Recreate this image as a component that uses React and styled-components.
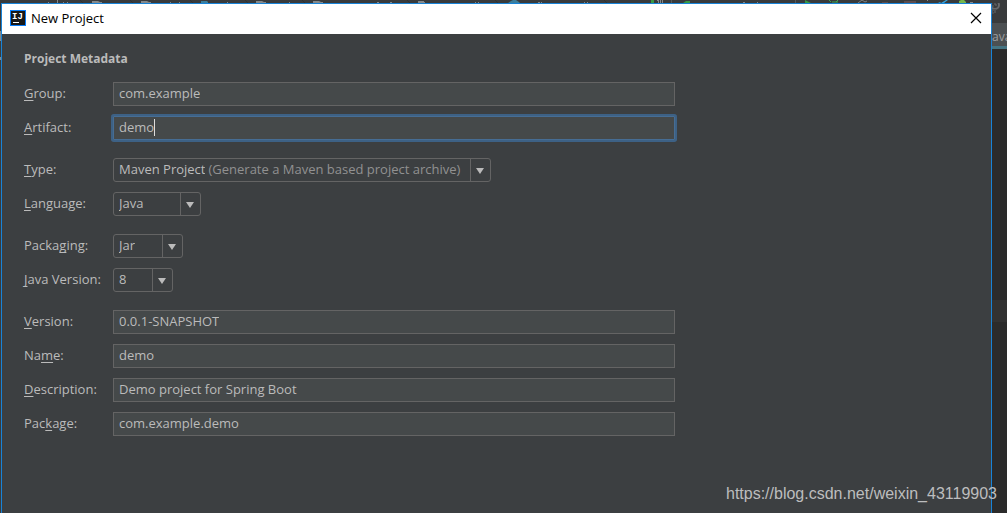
import React, { useState } from "react";
import styled, { createGlobalStyle } from "styled-components";

const textFields = {
  group: "com.example",
  artifact: "demo",
  version: "0.0.1-SNAPSHOT",
  name: "demo",
  description: "Demo project for Spring Boot",
  package: "com.example.demo",
};

const sections = [
  [
    { id: "group", label: ["", "G", "roup:"] },
    { id: "artifact", label: ["", "A", "rtifact:"] },
  ],
  [
    {
      id: "type",
      label: ["", "T", "ype:"],
      options: ["Maven Project", "Gradle Project"],
      hint: "(Generate a Maven based project archive)",
      width: 378,
    },
    {
      id: "language",
      label: ["", "L", "anguage:"],
      options: ["Java", "Kotlin", "Groovy"],
      width: 88,
    },
  ],
  [
    {
      id: "packaging",
      label: ["Packa", "g", "ing:"],
      options: ["Jar", "War"],
      width: 70,
    },
    {
      id: "javaVersion",
      label: ["", "J", "ava Version:"],
      options: ["8", "11", "14"],
      width: 60,
    },
  ],
  [
    { id: "version", label: ["", "V", "ersion:"] },
    { id: "name", label: ["Na", "m", "e:"] },
    { id: "description", label: ["", "D", "escription:"] },
    { id: "package", label: ["Pac", "k", "age:"] },
  ],
];

const ToolbarArt = () => (
  <svg width="1007" height="3" viewBox="0 0 1007 3" aria-hidden="true">
    <g fill="#85898b">
      <path d="M92 1h6l2 1h2v1H92zM141 1h6l2 1h2v1h-10zM256 1h6l2 1h2v1h-10zM313 1h6l2 1h2v1h-10zM418 1h6v1h1v1h-7z" />
      <path d="M48 2h1v1h-1zM57 0h1v3h-1zM63 2h1v1h-1zM67 2h1v1h-1zM170 2h1v1h-1zM179 2h1v1h-1zM227 2h1v1h-1zM289 2h1v1h-1zM377 2h2v1h-2zM390 2h2v1h-2zM475 2h1v1h-1zM478 2h1v1h-1zM538 2h2v1h-2zM541 2h1v1h-1zM584 2h1v1h-1zM587 2h1v1h-1zM743 2h2v1h-2zM757 2h1v1h-1z" />
      <path d="M657 0h2v3h-1V1h-1zM660 0h1v3h-1zM662 0h1v3h-1z" />
    </g>
    <path d="M201 1h6l1 1v1h-7zM508 3l3-2 2-1h3l3 2 1 1z" fill="#3b7e9c" />
    <path
      d="M80 0l3 3M130 0l3 3M190 0l3 3M245 0l3 3M302 0l3 3M407 0l3 3M495 0l3 3M604 0l3 3"
      stroke="#2f3233"
      fill="none"
    />
    <path d="M651 0h3v3h-3zM683 3l3-2h4v2zM805 0l6 3h-6z" fill="#389945" />
    <path d="M829 0l2 2M838 0l-2 2M832 2h6" stroke="#3fa650" fill="none" />
    <path d="M858 3l4-3 3 2 2-1" stroke="#7e8284" fill="none" />
    <path d="M671 0h1v3h-1zM795 0h1v3h-1z" fill="#565a5c" />
    <path d="M904 1h12v2h-12zM882 2h6v1h-6z" fill="#5d4c4d" />
    <path d="M938 3l2-1 1 1 5-3h2l-4 3z" fill="#36a3d9" />
    <path d="M959 3v-2l2-1h3l2 2v1z" fill="#75b74d" />
    <path d="M970 2h3v1h-3zM927 0h1v1h-1z" fill="#85898b" />
  </svg>
);

const SearchArt = () => (
  <svg width="15" height="14" viewBox="0 0 15 14" aria-hidden="true">
    <path d="M0 3h2M1 9v2" stroke="#5d6062" fill="none" />
    <circle cx="3" cy="2" r="4" stroke="#67696b" strokeWidth="2" fill="none" />
    <path d="M3 0v2h2" stroke="#67696b" fill="none" />
    <path d="M0 10v-3h3v3" stroke="#505355" strokeWidth="2" fill="none" />
  </svg>
);

const Logo = () => (
  <svg width="16" height="16" viewBox="0 0 16 16" aria-hidden="true">
    <rect width="16" height="16" fill="#087cfa" />
    <rect x="1" y="1" width="14" height="14" fill="#181818" />
    <LogoText x="2" y="9">
      IJ
    </LogoText>
    <rect x="3" y="12" width="6" height="1" fill="#fff" />
  </svg>
);

const CloseIcon = () => (
  <svg width="12" height="12" viewBox="0 0 12 12" aria-hidden="true">
    <path d="M1 1l10 10M11 1L1 11" stroke="#000" strokeWidth="1.2" />
  </svg>
);

const Row = ({ field, children }) => {
  const [before, key, after] = field.label;

  return (
    <FormRow>
      <Label htmlFor={field.id}>
        {before}
        <Mnemonic>{key}</Mnemonic>
        {after}
      </Label>
      {children}
    </FormRow>
  );
};

const ComboBox = ({ id, options, hint, width }) => (
  <Combo $width={width}>
    <ComboValue>
      <Select id={id}>
        {options.map((option) => (
          <option key={option}>{option}</option>
        ))}
      </Select>
      {hint && <Hint>{hint}</Hint>}
    </ComboValue>
    <Arrow>
      <svg width="8" height="6" viewBox="0 0 8 6" aria-hidden="true">
        <path d="M0 0h8L4 6z" fill="#bbbbbb" />
      </svg>
    </Arrow>
  </Combo>
);

const App = () => {
  const [values, setValues] = useState(textFields);
  const [focused, setFocused] = useState("artifact");

  const change = (event) =>
    setValues({ ...values, [event.target.id]: event.target.value });

  return (
    <Desktop>
      <GlobalStyle />
      <TopStrip>
        <ToolbarArt />
      </TopStrip>
      <Workspace>
        <LeftStrip />
        <Dialog>
          <TitleBar>
            <Logo />
            <DialogTitle>New Project</DialogTitle>
            <CloseButton type="button" aria-label="Close">
              <CloseIcon />
            </CloseButton>
          </TitleBar>
          <Form>
            <Heading>Project Metadata</Heading>
            {sections.map((fields) => (
              <Section key={fields[0].id}>
                {fields.map((field) => (
                  <Row key={field.id} field={field}>
                    {field.options ? (
                      <ComboBox
                        id={field.id}
                        options={field.options}
                        hint={field.hint}
                        width={field.width}
                      />
                    ) : (
                      <TextBox $focused={focused === field.id}>
                        <Input
                          id={field.id}
                          value={values[field.id]}
                          onChange={change}
                          onFocus={() => setFocused(field.id)}
                        />
                        {focused === field.id && <Caret />}
                      </TextBox>
                    )}
                  </Row>
                ))}
              </Section>
            ))}
          </Form>
        </Dialog>
        <EditorStrip>
          <EditorToolbar>
            <SearchArt />
          </EditorToolbar>
          <EditorTab>ava</EditorTab>
          <EditorCode>
            <CurrentLine />
          </EditorCode>
        </EditorStrip>
      </Workspace>
      <Watermark href="https://blog.csdn.net/weixin_43119903">
        https://blog.csdn.net/weixin_43119903
      </Watermark>
    </Desktop>
  );
};

export default App;

const GlobalStyle = createGlobalStyle`
  * {
    box-sizing: border-box;
  }
  body {
    margin: 0;
    background: #2b2b2b;
    color: #bbbbbb;
    font-family: "Open Sans", "Noto Sans", sans-serif;
    font-size: 13px;
    line-height: 18px;
  }
  svg {
    display: block;
    flex: none;
  }
`;

const Desktop = styled.div`
  position: relative;
  display: flex;
  flex-direction: column;
  min-height: 100vh;
  overflow: hidden;
`;

const TopStrip = styled.div`
  height: 3px;
  overflow: hidden;
  background: #393b3c;
`;

const Workspace = styled.div`
  display: flex;
  flex: 1;
`;

const LeftStrip = styled.div`
  width: 1px;
  background: linear-gradient(
    #393b3c 28px,
    #85898b 28px 38px,
    #393b3c 38px 54px,
    #85898b 54px 57px,
    #393b3c 57px
  );
`;

const Dialog = styled.main`
  flex: 1;
  display: flex;
  flex-direction: column;
  min-width: 0;
  background: #3c3f41;
  border: 1px solid #1883d7;
  border-bottom: none;
`;

const TitleBar = styled.header`
  display: flex;
  align-items: center;
  gap: 5px;
  height: 30px;
  padding: 0 9px 2px 8px;
  background: #ffffff;
`;

const LogoText = styled.text`
  fill: #ffffff;
  font-family: "Liberation Mono", monospace;
  font-size: 9px;
  font-weight: 700;
`;

const DialogTitle = styled.h1`
  flex: 1;
  margin: 0;
  color: #000000;
  font-size: 13px;
  font-weight: 400;
`;

const CloseButton = styled.button`
  display: flex;
  padding: 0;
  border: none;
  background: none;
`;

const Form = styled.form`
  flex: 1;
  padding: 16px 22px;
`;

const Heading = styled.h2`
  margin: 0 0 14px;
  font-size: 12px;
  line-height: 18px;
  font-weight: 700;
`;

const Section = styled.div`
  display: flex;
  flex-direction: column;
  gap: 10px;
  margin-bottom: 18px;
`;

const FormRow = styled.div`
  display: flex;
  align-items: center;
`;

const Label = styled.label`
  flex: none;
  width: 89px;
  padding-bottom: 2px;
`;

const Mnemonic = styled.u`
  text-decoration-thickness: 1px;
  text-decoration-skip-ink: none;
  text-underline-offset: 2px;
`;

const TextBox = styled.div`
  flex: 1;
  display: flex;
  align-items: center;
  max-width: 562px;
  height: 24px;
  padding: 0 5px 2px;
  border: 1px solid ${({ $focused }) => ($focused ? "#466d94" : "#646464")};
  border-radius: ${({ $focused }) => ($focused ? "1px" : "0")};
  box-shadow: ${({ $focused }) => ($focused ? "0 0 0 2px #3d6185" : "none")};
  background: #45494a;
`;

const Input = styled.input`
  field-sizing: content;
  max-width: 100%;
  padding: 0;
  border: none;
  outline: none;
  background: none;
  color: inherit;
  font: inherit;
  caret-color: transparent;
`;

const Caret = styled.span`
  width: 1px;
  height: 17px;
  background: #dddddd;
`;

const Combo = styled.div`
  display: flex;
  width: ${({ $width }) => $width}px;
  height: 24px;
  border: 1px solid #646464;
  border-radius: 3px;
`;

const ComboValue = styled.div`
  flex: 1;
  display: flex;
  align-items: center;
  gap: 3px;
  min-width: 0;
  padding: 0 0 2px 5px;
  white-space: nowrap;
`;

const Select = styled.select`
  appearance: none;
  field-sizing: content;
  padding: 0;
  border: none;
  outline: none;
  background: none;
  color: inherit;
  font: inherit;

  option {
    background: #3c3f41;
  }
`;

const Hint = styled.span`
  color: #919191;
`;

const Arrow = styled.span`
  display: flex;
  align-items: center;
  justify-content: center;
  width: 20px;
  padding: 1px 1px 0 0;
  border-left: 1px solid #646464;
  pointer-events: none;
`;

const EditorStrip = styled.aside`
  display: flex;
  flex-direction: column;
  width: 15px;
  overflow: hidden;
`;

const EditorToolbar = styled.div`
  height: 20px;
  background: #393b3c;
`;

const EditorTab = styled.div`
  height: 26px;
  padding-top: 5px;
  border-bottom: 3px solid #457482;
  background: #4c5052;
  color: #9c9fa1;
  font-size: 12px;
`;

const EditorCode = styled.div`
  flex: 1;
  padding-top: 251px;
  background: #2b2b2b;
`;

const CurrentLine = styled.div`
  height: 22px;
  background: #323232;
`;

const Watermark = styled.a`
  position: absolute;
  right: 10px;
  bottom: 10px;
  color: #bcbdbe;
  font-family: "Liberation Sans", Arial, sans-serif;
  font-size: 16px;
  text-decoration: none;
`;
